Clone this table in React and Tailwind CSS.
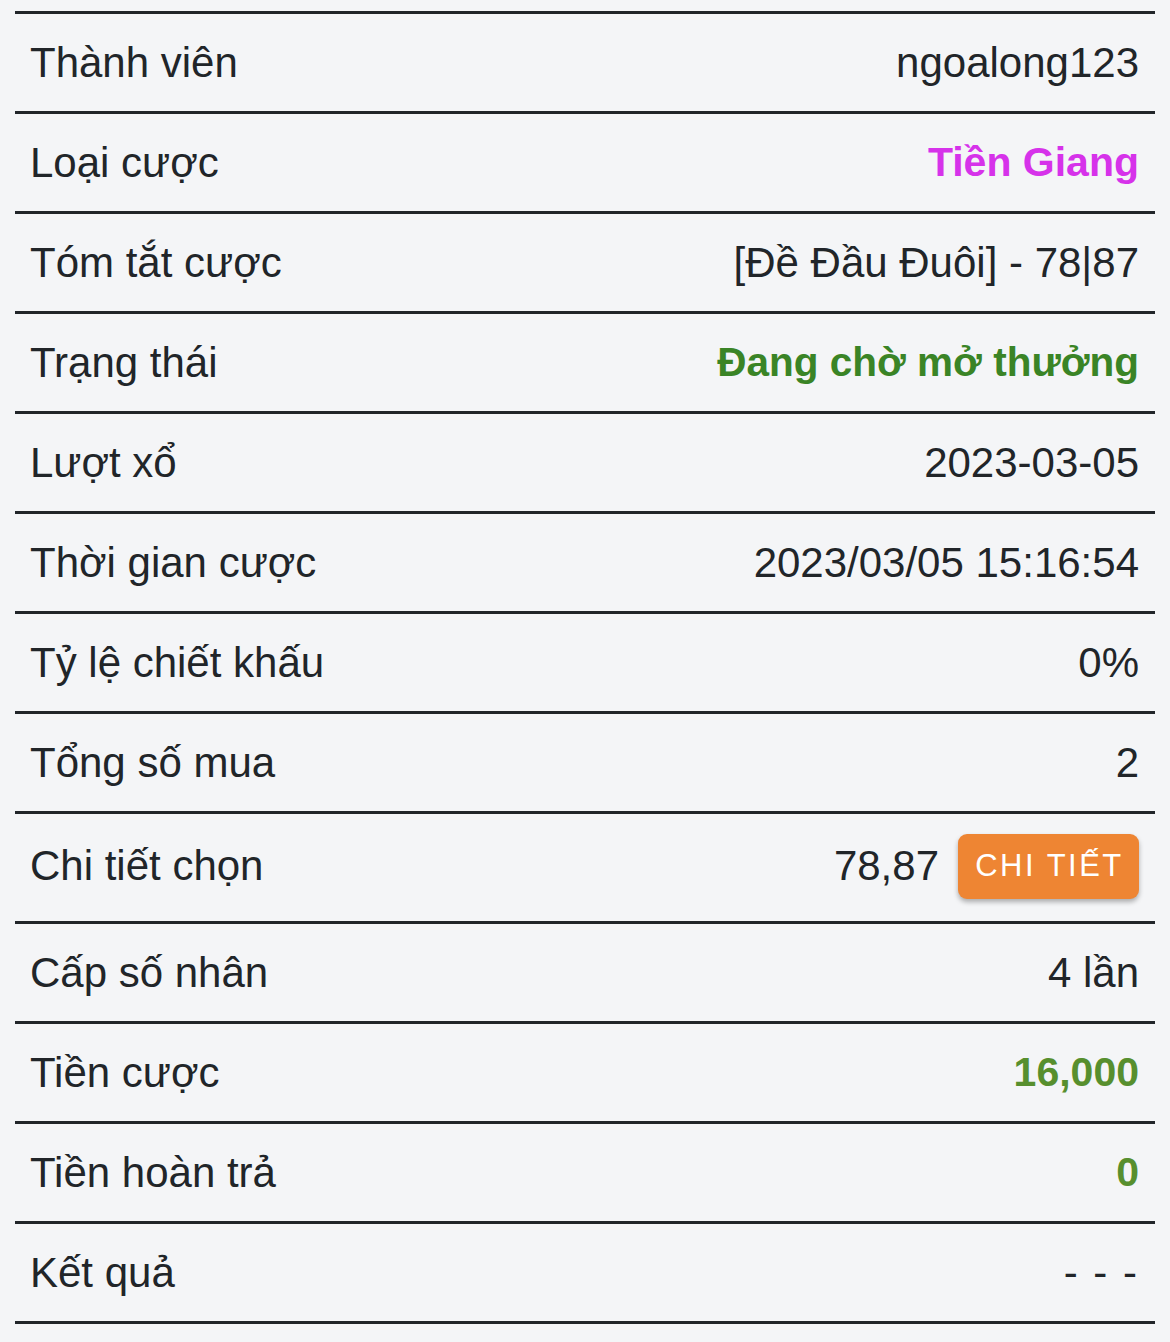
import React from "react";

const rows = [
  { label: "Thành viên", value: "ngoalong123" },
  { label: "Loại cược", value: "Tiền Giang", cls: "font-bold text-[41px] text-[#d632ea]" },
  { label: "Tóm tắt cược", value: "[Đề Đầu Đuôi] - 78|87" },
  { label: "Trạng thái", value: "Đang chờ mở thưởng", cls: "font-bold text-[40.5px] text-[#3a8426]" },
  { label: "Lượt xổ", value: "2023-03-05" },
  { label: "Thời gian cược", value: "2023/03/05 15:16:54" },
  { label: "Tỷ lệ chiết khấu", value: "0%" },
  { label: "Tổng số mua", value: "2" },
  { label: "Chi tiết chọn", value: "78,87", button: true },
  { label: "Cấp số nhân", value: "4 lần" },
  { label: "Tiền cược", value: "16,000", cls: "font-bold text-[41px] text-[#578f2e]" },
  { label: "Tiền hoàn trả", value: "0", cls: "font-bold text-[41px] text-[#578f2e]" },
  { label: "Kết quả", value: "- - -", cls: "tracking-[2px]" },
];

export default function App() {
  return (
    <div className="min-h-screen bg-[#f4f5f7] px-[15px] pt-[11px] text-[42px] text-[#212529] font-['Liberation_Sans',Arial,sans-serif]">
      <div className="border-t-[3px] border-[#212529]">
        {rows.map((row) => (
          <div
            key={row.label}
            className={
              "flex items-center justify-between border-b-[3px] border-[#212529] pl-[15px] pr-[16px] " +
              (row.button ? "h-[110px] pb-[3px]" : "h-[100px]")
            }
          >
            <span className="leading-none">{row.label}</span>
            {row.button ? (
              <div className="flex items-center gap-[19px]">
                <span className="leading-none">{row.value}</span>
                <button className="h-[65px] w-[181px] rounded-[9px] bg-[#ee8533] pl-[2px] text-[31px] tracking-[2.5px] text-white shadow-[0_3px_5px_rgba(0,0,0,0.3)]">
                  CHI TIẾT
                </button>
              </div>
            ) : (
              <span className={"leading-none " + (row.cls || "")}>{row.value}</span>
            )}
          </div>
        ))}
      </div>
    </div>
  );
}
